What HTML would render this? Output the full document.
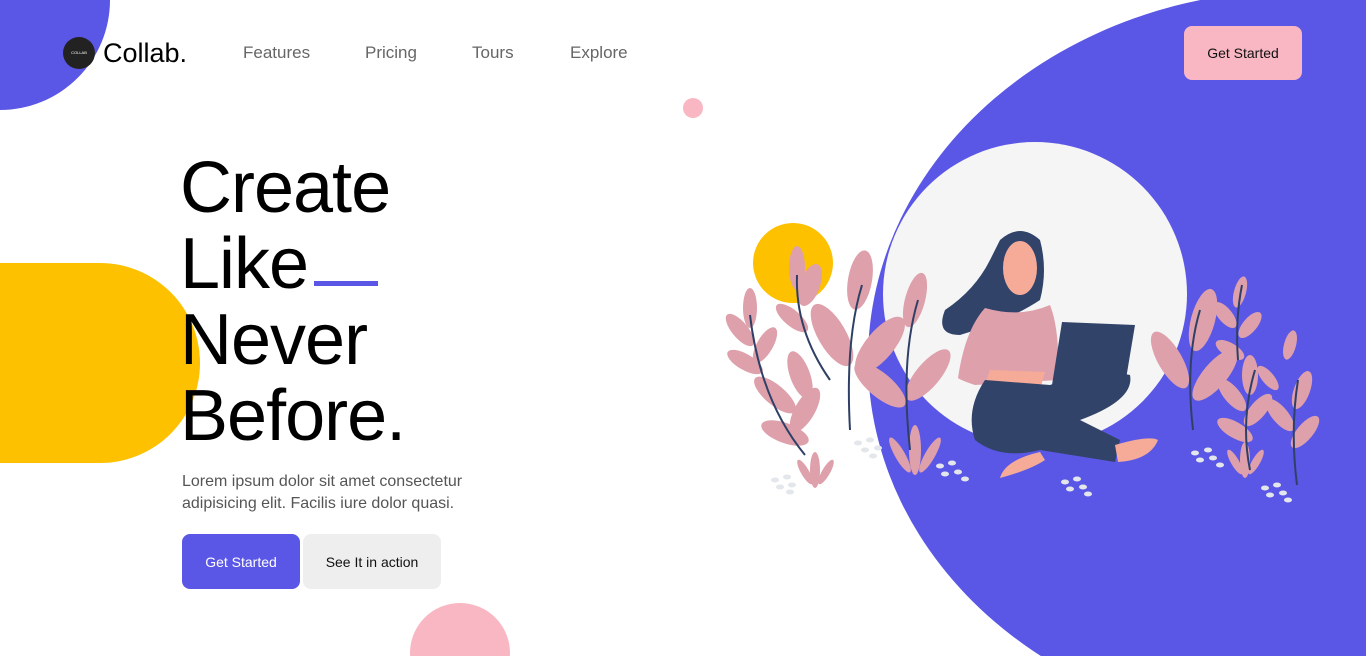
<!DOCTYPE html>
<html style="width:1366px;height:656px;overflow:hidden"><head><meta charset="utf-8"><style>
*{margin:0;padding:0;box-sizing:border-box}
body{width:1366px;height:656px;overflow:hidden;background:#fff;font-family:"Liberation Sans",sans-serif;position:relative}
.abs{position:absolute}
.nav a{position:absolute;top:43px;font-size:17px;color:#666;text-decoration:none;font-weight:300}
h1{position:absolute;left:180px;top:150px;font-size:72px;font-weight:400;line-height:76px;color:#000;letter-spacing:-1px}
.btn{position:absolute;border-radius:8px;font-size:14px;display:flex;align-items:center;justify-content:center}
</style></head><body>
<div class="abs" style="left:-110px;top:-110px;width:220px;height:220px;border-radius:50%;background:#5b57e6"></div>
<div class="abs" style="left:-100px;top:263px;width:300px;height:200px;border-radius:100px;background:#fdc100"></div>
<div class="abs" style="left:410px;top:603px;width:100px;height:100px;border-radius:50%;background:#f9b7c3"></div>
<div class="abs" style="left:683px;top:98px;width:20px;height:20px;border-radius:50%;background:#f9b7c3"></div>
<div class="abs" style="left:868px;top:-10px;width:864px;height:740px;border-radius:50%;background:#5b57e6"></div>
<div class="abs" style="left:883px;top:142px;width:304px;height:304px;border-radius:50%;background:#f5f5f5"></div>
<div class="abs" style="left:753px;top:223px;width:80px;height:80px;border-radius:50%;background:#fdc100"></div>

<div class="abs" style="left:63px;top:37px;width:32px;height:32px;border-radius:50%;background:#222;color:#fff;font-size:4px;text-align:center;line-height:32px">COLLAB</div>
<div class="abs" style="left:103px;top:38px;font-size:27px;color:#000">Collab.</div>
<div class="nav"><a style="left:243px">Features</a><a style="left:365px">Pricing</a><a style="left:472px">Tours</a><a style="left:570px">Explore</a></div>
<div class="btn" style="left:1184px;top:26px;width:118px;height:54px;background:#f9b7c3;color:#111">Get Started</div>

<h1>Create<br>Like<br>Never<br>Before.</h1>
<div class="abs" style="left:314px;top:281px;width:64px;height:5px;background:#5b57e6"></div>
<p class="abs" style="left:182px;top:471px;font-size:16px;line-height:22px;color:#555;width:300px">Lorem ipsum dolor sit amet consectetur adipisicing elit. Facilis iure dolor quasi.</p>
<div class="btn" style="left:182px;top:534px;width:118px;height:55px;background:#5b57e6;color:#fff">Get Started</div>
<div class="btn" style="left:303px;top:534px;width:138px;height:55px;background:#eee;color:#111">See It in action</div>

<svg class="abs" style="left:0;top:0" width="1366" height="656">
<g fill="#dea0ab">
<ellipse cx="750" cy="308" rx="7" ry="20"/>
<ellipse cx="740" cy="330" rx="8" ry="20" transform="rotate(-40 740 330)"/>
<ellipse cx="765" cy="345" rx="8" ry="20" transform="rotate(30 765 345)"/>
<ellipse cx="745" cy="362" rx="8" ry="20" transform="rotate(-60 745 362)"/>
<ellipse cx="775" cy="395" rx="10" ry="26" transform="rotate(-50 775 395)"/>
<ellipse cx="800" cy="375" rx="10" ry="25" transform="rotate(-20 800 375)"/>
<ellipse cx="805" cy="410" rx="10" ry="25" transform="rotate(30 805 410)"/>
<ellipse cx="785" cy="433" rx="10" ry="25" transform="rotate(-70 785 433)"/>
<ellipse cx="797" cy="268" rx="8" ry="22"/>
<ellipse cx="792" cy="318" rx="8" ry="20" transform="rotate(-50 792 318)"/>
<ellipse cx="832" cy="335" rx="14" ry="35" transform="rotate(-30 832 335)"/>
<ellipse cx="860" cy="280" rx="12" ry="30" transform="rotate(10 860 280)"/>
<ellipse cx="810" cy="285" rx="10" ry="22" transform="rotate(20 810 285)"/>
<ellipse cx="880" cy="345" rx="14" ry="35" transform="rotate(40 880 345)"/>
<ellipse cx="915" cy="300" rx="10" ry="28" transform="rotate(15 915 300)"/>
<ellipse cx="880" cy="385" rx="12" ry="32" transform="rotate(-50 880 385)"/>
<ellipse cx="928" cy="375" rx="12" ry="32" transform="rotate(40 928 375)"/>
<ellipse cx="815" cy="470" rx="5" ry="18"/>
<ellipse cx="805" cy="472" rx="4" ry="14" transform="rotate(-30 805 472)"/>
<ellipse cx="826" cy="472" rx="4" ry="14" transform="rotate(30 826 472)"/>
<ellipse cx="915" cy="450" rx="6" ry="25"/>
<ellipse cx="900" cy="455" rx="5" ry="20" transform="rotate(-30 900 455)"/>
<ellipse cx="930" cy="455" rx="5" ry="20" transform="rotate(30 930 455)"/>
<ellipse cx="1203" cy="320" rx="12" ry="32" transform="rotate(15 1203 320)"/>
<ellipse cx="1170" cy="360" rx="12" ry="32" transform="rotate(-30 1170 360)"/>
<ellipse cx="1215" cy="375" rx="12" ry="32" transform="rotate(40 1215 375)"/>
<ellipse cx="1240" cy="292" rx="6" ry="16" transform="rotate(15 1240 292)"/>
<ellipse cx="1225" cy="315" rx="7" ry="16" transform="rotate(-40 1225 315)"/>
<ellipse cx="1250" cy="325" rx="7" ry="16" transform="rotate(40 1250 325)"/>
<ellipse cx="1230" cy="350" rx="7" ry="16" transform="rotate(-60 1230 350)"/>
<ellipse cx="1250" cy="375" rx="8" ry="20"/>
<ellipse cx="1232" cy="395" rx="8" ry="20" transform="rotate(-40 1232 395)"/>
<ellipse cx="1258" cy="410" rx="8" ry="20" transform="rotate(40 1258 410)"/>
<ellipse cx="1235" cy="430" rx="8" ry="20" transform="rotate(-60 1235 430)"/>
<ellipse cx="1290" cy="345" rx="6" ry="15" transform="rotate(15 1290 345)"/>
<ellipse cx="1268" cy="378" rx="6" ry="15" transform="rotate(-40 1268 378)"/>
<ellipse cx="1302" cy="390" rx="8" ry="20" transform="rotate(20 1302 390)"/>
<ellipse cx="1280" cy="415" rx="8" ry="20" transform="rotate(-40 1280 415)"/>
<ellipse cx="1305" cy="432" rx="8" ry="20" transform="rotate(40 1305 432)"/>
<ellipse cx="1245" cy="460" rx="5" ry="18"/>
<ellipse cx="1235" cy="462" rx="4" ry="14" transform="rotate(-30 1235 462)"/>
<ellipse cx="1256" cy="462" rx="4" ry="14" transform="rotate(30 1256 462)"/>
</g>
<g stroke="#2f4066" stroke-width="2" fill="none">
<path d="M750 315 Q760 400 805 455"/><path d="M797 275 Q795 330 830 380"/>
<path d="M862 285 Q845 340 850 430"/><path d="M918 300 Q900 360 910 450"/>
<path d="M1200 310 Q1185 360 1193 430"/><path d="M1242 285 Q1235 320 1238 360"/>
<path d="M1255 370 Q1240 420 1250 470"/><path d="M1298 380 Q1290 430 1297 485"/>
</g>
<path d="M1000 240 Q1020 222 1040 240 Q1048 270 1040 300 Q1010 320 960 335 Q935 335 945 310 Q975 290 990 260Z" fill="#314369"/>
<ellipse cx="1020" cy="268" rx="17" ry="27" fill="#f5ab98"/>
<path d="M985 308 Q1020 318 1050 305 Q1060 330 1058 380 L975 385 Q960 380 958 378 Q965 330 985 308Z" fill="#dea0ab"/>
<path d="M990 370 L1045 372 L1040 390 L985 385Z" fill="#f5ab98"/>
<path d="M1062 322 L1135 325 L1125 385 L1052 385Z" fill="#314369"/>
<path d="M1055 388 L1070 388 L1063 396Z" fill="#fff"/>
<path d="M985 380 Q965 410 975 440 Q1000 460 1040 450 L1115 462 L1120 440 L1080 420 Q1135 400 1130 375 Q1100 368 1050 385Z" fill="#314369"/>
<path d="M1115 445 Q1150 435 1158 440 Q1150 460 1118 462Z" fill="#f5ab98"/>
<path d="M1040 452 Q1005 460 1000 478 Q1030 470 1045 460Z" fill="#f5ab98"/>
<g fill="#e3e6ea">
<ellipse cx="775" cy="480" rx="4" ry="2.5"/><ellipse cx="787" cy="477" rx="4" ry="2.5"/><ellipse cx="780" cy="487" rx="4" ry="2.5"/><ellipse cx="792" cy="485" rx="4" ry="2.5"/><ellipse cx="790" cy="492" rx="4" ry="2.5"/>
<ellipse cx="858" cy="443" rx="4" ry="2.5"/><ellipse cx="870" cy="440" rx="4" ry="2.5"/><ellipse cx="865" cy="450" rx="4" ry="2.5"/><ellipse cx="878" cy="448" rx="4" ry="2.5"/><ellipse cx="873" cy="456" rx="4" ry="2.5"/>
<ellipse cx="940" cy="466" rx="4" ry="2.5"/><ellipse cx="952" cy="463" rx="4" ry="2.5"/><ellipse cx="945" cy="474" rx="4" ry="2.5"/><ellipse cx="958" cy="472" rx="4" ry="2.5"/><ellipse cx="965" cy="479" rx="4" ry="2.5"/>
<ellipse cx="1065" cy="482" rx="4" ry="2.5"/><ellipse cx="1077" cy="479" rx="4" ry="2.5"/><ellipse cx="1070" cy="489" rx="4" ry="2.5"/><ellipse cx="1083" cy="487" rx="4" ry="2.5"/><ellipse cx="1088" cy="494" rx="4" ry="2.5"/>
<ellipse cx="1195" cy="453" rx="4" ry="2.5"/><ellipse cx="1208" cy="450" rx="4" ry="2.5"/><ellipse cx="1200" cy="460" rx="4" ry="2.5"/><ellipse cx="1213" cy="458" rx="4" ry="2.5"/><ellipse cx="1220" cy="465" rx="4" ry="2.5"/>
<ellipse cx="1265" cy="488" rx="4" ry="2.5"/><ellipse cx="1277" cy="485" rx="4" ry="2.5"/><ellipse cx="1270" cy="495" rx="4" ry="2.5"/><ellipse cx="1283" cy="493" rx="4" ry="2.5"/><ellipse cx="1288" cy="500" rx="4" ry="2.5"/>
</g>
</svg>
</body></html>
